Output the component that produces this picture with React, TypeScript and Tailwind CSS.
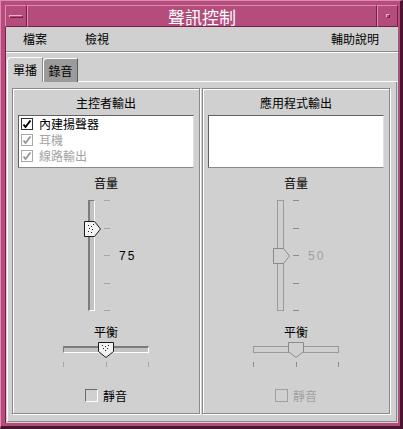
import React from 'react';

const cjk = "font-['Noto_Sans_CJK_TC','Noto_Sans_CJK_JP',sans-serif]";

const Check = ({ disabled }: { disabled?: boolean }) => (
  <svg width="10" height="10" viewBox="0 0 10 10" className="block">
    <path
      d="M1.5 5.5 L3.5 8 L8.5 1.5"
      fill="none"
      stroke={disabled ? '#9a9a9a' : '#000'}
      strokeWidth="2"
    />
  </svg>
);

const ListCheck = ({ disabled }: { disabled?: boolean }) => (
  <div
    className={`w-[12px] h-[12px] flex items-center justify-center border ${
      disabled ? 'border-[#a8a8a8] bg-white' : 'border-[#303030] bg-white'
    }`}
  >
    <Check disabled={disabled} />
  </div>
);

const VThumb = ({ disabled }: { disabled?: boolean }) => (
  <svg width="17" height="16" viewBox="0 0 17 16" className="block">
    <polygon
      points="0.5,0.5 10.5,0.5 16.5,8 10.5,15.5 0.5,15.5"
      fill={disabled ? '#d0d0d0' : '#f2f2f2'}
      stroke={disabled ? '#8a8a8a' : '#1a1a1a'}
    />
    {!disabled && (
      <g fill="#222">
        <rect x="4" y="4" width="1" height="1" />
        <rect x="7" y="5" width="1" height="1" />
        <rect x="5" y="7" width="1" height="1" />
        <rect x="8" y="8" width="1" height="1" />
        <rect x="4" y="10" width="1" height="1" />
        <rect x="7" y="11" width="1" height="1" />
        <rect x="9" y="3" width="1" height="1" />
      </g>
    )}
  </svg>
);

const HThumb = ({ disabled }: { disabled?: boolean }) => (
  <svg width="16" height="16" viewBox="0 0 16 16" className="block">
    <polygon
      points="0.5,0.5 15.5,0.5 15.5,9.5 8,15.5 0.5,9.5"
      fill={disabled ? '#d0d0d0' : '#f2f2f2'}
      stroke={disabled ? '#8a8a8a' : '#1a1a1a'}
    />
    {!disabled && (
      <g fill="#222">
        <rect x="4" y="3" width="1" height="1" />
        <rect x="7" y="4" width="1" height="1" />
        <rect x="10" y="3" width="1" height="1" />
        <rect x="5" y="6" width="1" height="1" />
        <rect x="9" y="6" width="1" height="1" />
        <rect x="7" y="8" width="1" height="1" />
      </g>
    )}
  </svg>
);

type GroupProps = {
  title: string;
  items: { label: string; checked: boolean; disabled: boolean }[];
  volume: number;
  disabled?: boolean;
  padLeft: string;
};

const Group = ({ title, items, volume, disabled, padLeft }: GroupProps) => {
  const tick = disabled ? 'bg-[#8c8c8c]' : 'bg-[#93a9be]';
  const thumbTop = Math.round((1 - volume / 100) * 110) - 7;
  return (
    <div className="w-[188px] h-[326px] border border-[#8a8a8a] shadow-[inset_1px_1px_0_#fff,1px_1px_0_#fff] flex flex-col">
      <div className="mt-[6px] h-[16px] leading-[16px] text-[12px] text-black text-center">{title}</div>
      <div className="mx-[5px] mt-[4px] h-[53px] bg-white border border-[#606060] border-r-[#e0e0e0] border-b-[#8a8a8a]">
        {items.map((it) => (
          <div key={it.label} className="h-[16px] flex items-center pl-[2px] gap-[6px]">
            <ListCheck disabled={it.disabled} />
            <span
              className={`text-[12px] leading-[16px] ${it.disabled ? 'text-[#a4a4a4]' : 'text-black'}`}
            >
              {it.label}
            </span>
          </div>
        ))}
      </div>
      <div className="mt-[8px] h-[14px] leading-[14px] text-[12px] text-black text-center">音量</div>
      <div className={`mt-[10px] h-[111px] flex items-stretch ${padLeft}`}>
        <div className="relative w-[17px]">
          <div
            className={`absolute left-[4px] top-0 w-[7px] h-[111px] ${
              disabled
                ? 'border border-[#9a9a9a]'
                : 'border-l-2 border-t border-[#7c7c7c] border-r border-b border-r-white border-b-white bg-[#c2c2c2]'
            }`}
          />
          <div className="absolute left-0" style={{ top: thumbTop }}>
            <VThumb disabled={disabled} />
          </div>
        </div>
        <div className="ml-[3px] w-[6px] flex flex-col justify-between">
          {[0, 1, 2, 3, 4].map((i) => (
            <div key={i} className={`h-px ${tick}`} />
          ))}
        </div>
        <div
          className={`ml-[9px] flex items-center font-['Liberation_Sans',sans-serif] text-[12px] tracking-[2px] ${
            disabled ? 'text-[#a0a0a0]' : 'text-black'
          }`}
        >
          {volume}
        </div>
      </div>
      <div className="mt-[14px] h-[14px] leading-[14px] text-[12px] text-black text-center">平衡</div>
      <div className="mt-[3px] flex justify-center">
        <div className="relative w-[86px] h-[16px]">
          <div
            className={`absolute left-0 top-[4px] w-[86px] h-[7px] ${
              disabled
                ? 'border border-[#9a9a9a]'
                : 'border-t-2 border-l border-[#7c7c7c] border-r border-b border-r-white border-b-white bg-[#c2c2c2]'
            }`}
          />
          <div className="absolute left-[35px] top-0">
            <HThumb disabled={disabled} />
          </div>
        </div>
      </div>
      <div className="mt-[4px] flex justify-center">
        <div className="w-[86px] h-[5px] flex justify-between">
          {[0, 1, 2].map((i) => (
            <div key={i} className={`w-px h-[5px] ${tick}`} />
          ))}
        </div>
      </div>
      <div className="mt-[22px] flex justify-center items-center gap-[5px]">
        <div
          className={`w-[13px] h-[13px] border ${
            disabled
              ? 'border-[#a0a0a0]'
              : 'border-[#6a6a6a] border-r-white border-b-white'
          }`}
        />
        <span className={`text-[12px] leading-[13px] ${disabled ? 'text-[#a0a0a0]' : 'text-black'}`}>靜音</span>
      </div>
    </div>
  );
};

export default function App() {
  return (
    <div
      className={`${cjk} w-[403px] h-[429px] bg-[#b44d7c] border-t border-l border-[#e08ab2] border-r-[3px] border-b-[3px] border-r-[#4a1530] border-b-[#4a1530] pt-[4px] pl-[4px] pr-[2px] pb-[3px] flex flex-col`}
    >
      {/* title bar */}
      <div className="h-[22px] flex">
        <div className="w-[22px] border border-[#e08ab2] border-r-[#6e2347] border-b-[#6e2347] flex items-center justify-center">
          <div className="w-[14px] h-[3px] border border-[#f0b0cc] border-r-[#6e2347] border-b-[#6e2347]" />
        </div>
        <div className="flex-1 border border-[#e08ab2] border-r-[#6e2347] border-b-[#6e2347] flex items-center justify-center text-white text-[17px] leading-none">
          聲訊控制
        </div>
        <div className="w-[21px] border border-[#e08ab2] border-r-[#6e2347] border-b-[#6e2347] flex items-center justify-center">
          <div className="w-[4px] h-[4px] border border-[#f0b0cc] border-r-[#6e2347] border-b-[#6e2347]" />
        </div>
      </div>

      <div className="flex-1 bg-[#d0d0d0] border-l border-[#6e2347] flex flex-col">
        {/* menu bar */}
        <div className="h-[24px] flex items-center text-[12px] text-black pl-[17px] pr-[19px]">
          <span>檔案</span>
          <span className="ml-[38px]">檢視</span>
          <span className="ml-auto">輔助說明</span>
        </div>
        <div className="h-px bg-[#8a8a8a]" />
        <div className="h-px bg-white" />

        {/* tabs */}
        <div className="mt-[4px] pl-[1px] flex items-end h-[25px]">
          <div className="relative w-[36px] h-[25px] border-t border-l border-white border-r border-r-[#8a8a8a] rounded-tl-[4px] flex items-center justify-center text-[12px] text-black">
            單播
          </div>
          <div className="w-[35px] h-[24px] bg-[#9b9b9b] border-t border-l border-white border-r border-r-[#5a5a5a] rounded-tl-[4px] flex items-center justify-center text-[12px] text-black">
            錄音
          </div>
          <div className="flex-1 h-px bg-white self-end" />
        </div>

        {/* panel */}
        <div className="ml-[1px] mr-[1px] h-[340px] border-l border-white border-r border-r-[#8a8a8a] border-b border-b-[#8a8a8a] pl-[4px] pt-[6px] flex gap-[2px]">
          <Group
            title="主控者輸出"
            items={[
              { label: '內建揚聲器', checked: true, disabled: false },
              { label: '耳機', checked: true, disabled: true },
              { label: '線路輸出', checked: true, disabled: true },
            ]}
            volume={75}
            padLeft="pl-[71px]"
          />
          <Group title="應用程式輸出" items={[]} volume={50} disabled padLeft="pl-[70px]" />
        </div>
      </div>
    </div>
  );
}
